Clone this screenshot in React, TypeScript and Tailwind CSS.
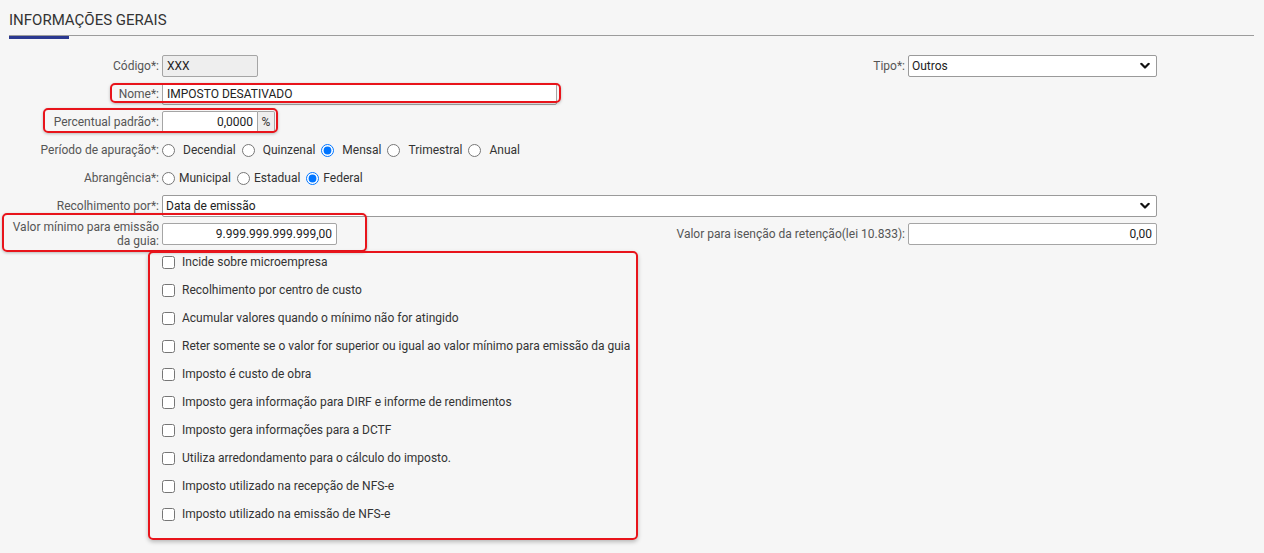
import { ReactNode } from "react";

const checks = [
  "Incide sobre microempresa",
  "Recolhimento por centro de custo",
  "Acumular valores quando o mínimo não for atingido",
  "Reter somente se o valor for superior ou igual ao valor mínimo para emissão da guia",
  "Imposto é custo de obra",
  "Imposto gera informação para DIRF e informe de rendimentos",
  "Imposto gera informações para a DCTF",
  "Utiliza arredondamento para o cálculo do imposto.",
  "Imposto utilizado na recepção de NFS-e",
  "Imposto utilizado na emissão de NFS-e",
];

function Label({ children, className = "" }: { children: ReactNode; className?: string }) {
  return (
    <label className={`shrink-0 pr-[1px] text-right leading-[14px] text-[#555] ${className}`}>{children}</label>
  );
}

function Chevron() {
  return (
    <svg
      className="pointer-events-none absolute right-[7px] top-1/2 -translate-y-1/2"
      width="10"
      height="7"
      viewBox="0 0 10 7"
    >
      <path d="M1.3 1.3 L5 5 L8.7 1.3" fill="none" stroke="#111" strokeWidth="2.2" strokeLinecap="round" strokeLinejoin="round" />
    </svg>
  );
}

function Select({ value, className = "" }: { value: string; className?: string }) {
  return (
    <div className={`relative h-[22px] ${className}`}>
      <select
        defaultValue={value}
        className="h-full w-full appearance-none rounded-[2px] border border-[#9a9a9a] bg-white pl-[3px] text-[12px] text-[#222] outline-none"
      >
        <option>{value}</option>
      </select>
      <Chevron />
    </div>
  );
}

function Text({ value, className = "", right = false }: { value: string; className?: string; right?: boolean }) {
  return (
    <input
      readOnly
      defaultValue={value}
      className={`h-[22px] rounded-[2px] border border-[#a5a5a5] px-[4px] text-[12px] text-[#222] outline-none ${right ? "text-right" : ""} ${className}`}
    />
  );
}

function Radios({ name, items, checked, spaced }: { name: string; items: string[]; checked: string; spaced?: boolean }) {
  return (
    <div className="flex items-center">
      {items.map((it, i) => (
        <label key={it} className={`flex items-center text-[#333] ${i > 0 ? "ml-[6px]" : ""}`}>
          <input type="radio" name={name} defaultChecked={it === checked} className="m-0 h-[13px] w-[13px]" />
          <span className={spaced ? "ml-[8px]" : "ml-[4px]"}>{it}</span>
        </label>
      ))}
    </div>
  );
}

export default function App() {
  return (
    <div className="relative min-h-[553px] w-[1264px] bg-[#f6f6f6] font-['Roboto',sans-serif] text-[12px]">
      <div className="pl-[9px] pr-[10px] pt-[10px]">
        <h2 className="text-[15px] leading-[20px] text-[#333]">INFORMAÇÕES GERAIS</h2>
        <div className="relative mt-[5px] h-px bg-[#9c9c9c]">
          <div className="absolute left-0 top-[1px] h-[3px] w-[60px] bg-[#2b3990]" />
        </div>
      </div>

      <div className="mt-[19px] flex flex-col gap-[6px]">
        <div className="flex h-[22px] items-center">
          <Label className="w-[160px]">Código*:</Label>
          <Text value="XXX" className="ml-[2px] w-[96px] bg-[#eeeeee]" />
          <div className="flex-1" />
          <Label>Tipo*:</Label>
          <Select value="Outros" className="ml-[2px] mr-[107px] w-[249px]" />
        </div>

        <div className="flex h-[22px] items-center">
          <Label className="w-[160px]">Nome*:</Label>
          <Text value="IMPOSTO DESATIVADO" className="ml-[2px] w-[395px] bg-white" />
        </div>

        <div className="flex h-[22px] items-center">
          <Label className="w-[160px]">Percentual padrão*:</Label>
          <Text value="0,0000" right className="ml-[2px] w-[96px] rounded-r-none bg-white" />
          <span className="flex h-[22px] w-[17px] items-center justify-center rounded-r-[2px] border border-l-0 border-[#a5a5a5] bg-[#eeeeee] text-[#333]">
            %
          </span>
        </div>

        <div className="flex h-[22px] items-center">
          <Label className="w-[160px]">Período de apuração*:</Label>
          <div className="ml-[2px]">
            <Radios name="periodo" spaced checked="Mensal" items={["Decendial", "Quinzenal", "Mensal", "Trimestral", "Anual"]} />
          </div>
        </div>

        <div className="flex h-[22px] items-center">
          <Label className="w-[160px]">Abrangência*:</Label>
          <div className="ml-[2px]">
            <Radios name="abrangencia" checked="Federal" items={["Municipal", "Estadual", "Federal"]} />
          </div>
        </div>

        <div className="flex h-[22px] items-center">
          <Label className="w-[160px]">Recolhimento por*:</Label>
          <Select value="Data de emissão" className="ml-[2px] w-[995px]" />
        </div>

        <div className="flex h-[22px] items-center">
          <Label className="w-[160px]">
            Valor mínimo para emissão
            <br />
            da guia:
          </Label>
          <Text value="9.999.999.999.999,00" right className="ml-[2px] w-[175px] bg-white" />
          <div className="flex-1" />
          <Label>Valor para isenção da retenção(lei 10.833):</Label>
          <Text value="0,00" right className="ml-[2px] mr-[107px] w-[249px] bg-white" />
        </div>

        {checks.map((c) => (
          <label key={c} className="flex h-[22px] items-center pl-[162px] text-[#333]">
            <input type="checkbox" className="m-0 h-[13px] w-[13px]" />
            <span className="ml-[7px]">{c}</span>
          </label>
        ))}
      </div>

      {/* red annotation frames drawn over the form */}
      <div className="pointer-events-none absolute left-[110px] top-[83px] h-[20px] w-[451px] rounded-[5px] border-2 border-[#e8141b] shadow-[0_1px_3px_rgba(0,0,0,0.25)]" />
      <div className="pointer-events-none absolute left-[43px] top-[108px] h-[25px] w-[235px] rounded-[5px] border-2 border-[#e8141b] shadow-[0_1px_3px_rgba(0,0,0,0.25)]" />
      <div className="pointer-events-none absolute left-[2px] top-[213px] h-[39px] w-[365px] rounded-[5px] border-2 border-[#e8141b] shadow-[0_1px_3px_rgba(0,0,0,0.25)]" />
      <div className="pointer-events-none absolute left-[148px] top-[251px] h-[289px] w-[490px] rounded-[5px] border-2 border-[#e8141b] shadow-[0_2px_4px_rgba(0,0,0,0.25)]" />
    </div>
  );
}
